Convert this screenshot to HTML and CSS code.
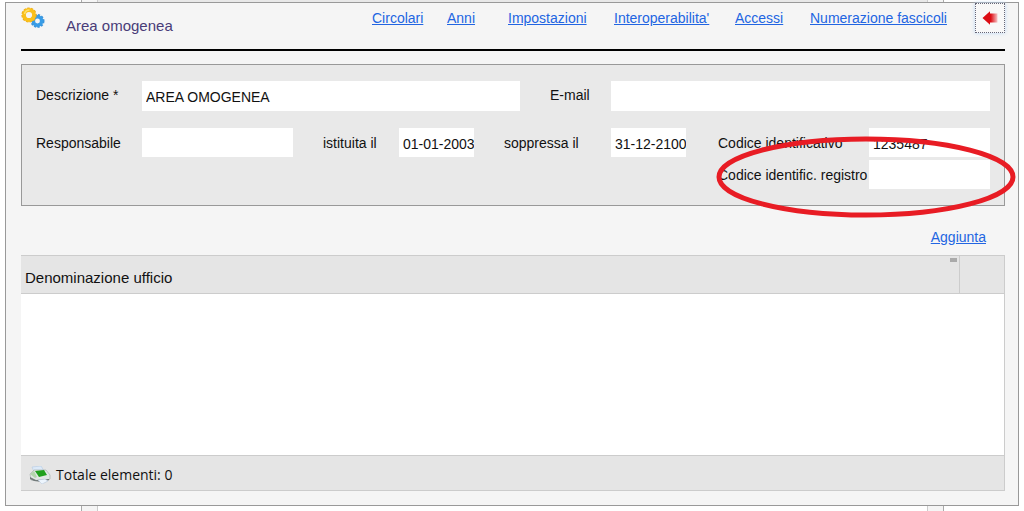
FILE: index.html
```html
<!DOCTYPE html>
<html lang="it">
<head>
<meta charset="utf-8">
<title>Area omogenea</title>
<link rel="stylesheet" href="styles.css">
</head>
<body>
<div class="shell">
  <div class="backdrop"><div class="backdrop-main"></div></div>
  <main class="dialog">
    <header class="header">
      <svg class="gears" viewBox="0 0 24 22" aria-hidden="true">
        <circle cx="16.500" cy="14" r="5.500" fill="none" stroke="#3b93da" stroke-width="3" stroke-dasharray="2 1.200"/>
        <circle cx="16.500" cy="14" r="4.200" fill="none" stroke="#389ce6" stroke-width="3.500"/>
        <circle cx="8" cy="8" r="6.300" fill="none" stroke="#eaa91a" stroke-width="2.600" stroke-dasharray="2.300 1.100"/>
        <circle cx="8" cy="8" r="5" fill="none" stroke="#fac01b" stroke-width="3.800"/>
        <path d="M3.500 7a5 5 0 0 1 5-4" fill="none" stroke="#ffe069" stroke-width="1.500"/>
      </svg>
      <h1 class="title">Area omogenea</h1>
      <nav class="nav">
        <a href="#">Circolari</a>
        <a href="#">Anni</a>
        <a href="#">Impostazioni</a>
        <a href="#">Interoperabilita'</a>
        <a href="#">Accessi</a>
        <a href="#">Numerazione fascicoli</a>
      </nav>
      <button class="back" type="button" aria-label="Indietro">
        <svg viewBox="0 0 16 14" width="16" height="14" aria-hidden="true">
          <defs><linearGradient id="fade"><stop offset="0.550" stop-color="#dc0d14"/><stop offset="1" stop-color="#f6c4c6"/></linearGradient></defs>
          <path d="M0.500 7 8 0.300V2.500h7.500v9H8v2.200z" fill="url(#fade)"/>
        </svg>
      </button>
    </header>

    <form class="panel">
      <div class="row row-main">
        <label for="descrizione">Descrizione *</label>
        <input id="descrizione" type="text" value="AREA OMOGENEA">
        <label class="col-email" for="email">E-mail</label>
        <input id="email" type="text">
      </div>
      <div class="row row-detail">
        <label for="responsabile">Responsabile</label>
        <input id="responsabile" type="text">
        <label class="col-from" for="istituita">istituita il</label>
        <input id="istituita" class="date" type="text" value="01-01-2003">
        <label class="col-to" for="soppressa">soppressa il</label>
        <input id="soppressa" class="date" type="text" value="31-12-2100">
        <label class="col-code" for="codice">Codice identificativo</label>
        <input id="codice" type="text" value="1235487">
        <label class="col-code" for="registro">Codice identific. registro</label>
        <input id="registro" type="text">
      </div>
      <svg class="mark" viewBox="0 0 300 82" aria-hidden="true">
        <ellipse cx="150" cy="41" rx="147" ry="38" fill="none" stroke="#e81c24" stroke-width="5"/>
      </svg>
    </form>

    <div class="actions"><a href="#">Aggiunta</a></div>

    <table class="offices">
      <thead>
        <tr><th class="name" scope="col">Denominazione ufficio<span class="grip"></span></th><th class="tools"></th></tr>
      </thead>
      <tbody>
        <tr><td class="empty" colspan="2"></td></tr>
      </tbody>
      <tfoot>
        <tr><td colspan="2">
          <div class="total">
            <svg viewBox="0 0 22 18" width="22" height="18" aria-hidden="true">
              <path d="M3 1 12 0l3 5-9 3z" fill="#dceaf9" stroke="#b5cbe2" stroke-width="0.600"/>
              <path d="M1 8 5 4l12 0 4 5v4l-5 3-14-2z" fill="#e2e7e6" stroke="#a9b1b0" stroke-width="0.700"/>
              <path d="M1 11l6 3 13-1v1l-5 2-10-1-4-2z" fill="#747b7b"/>
              <path d="M6 5l9-1 3 5-8 2z" fill="#20a01e"/>
              <path d="M1 8l4-3 3 6-2 1z" fill="#b4d5ad"/>
              <path d="M9 14l7-1 3 2-6 3z" fill="#edf5fd" stroke="#b4c7dc" stroke-width="0.500"/>
            </svg>
            <span>Totale elementi: 0</span>
          </div>
        </td></tr>
      </tfoot>
    </table>
  </main>
</div>
</body>
</html>
```
FILE: styles.css
```css
* { box-sizing: border-box; }

body {
  margin: 0;
  background: #fff;
  color: #111;
  font: 14px/16px "Liberation Sans", Arial, sans-serif;
}

a { color: #2265e2; }

.shell {
  display: grid;
  min-height: 100vh;
}

.backdrop,
.dialog { grid-area: 1 / 1; }

.backdrop {
  display: flex;
  margin: 0 80px 0 81px;
  padding: 0 15px;
  background: #f5f5f5;
  border: solid #aaa;
  border-width: 0 1px;
}

.backdrop-main {
  flex: 1;
  background: linear-gradient(#e8e8e8 50%, #fff 50%);
  border: solid #ccc;
  border-width: 0 1px;
}

.dialog {
  display: flex;
  flex-direction: column;
  margin: 2px 5px 5px;
  padding: 0 13px 14px 15px;
  background: #f5f5f5;
  border: 1px solid #999;
}

.header {
  display: flex;
  align-items: flex-start;
  height: 48px;
  border-bottom: 2px solid #000;
}

.gears {
  width: 24px;
  height: 22px;
  margin-top: 4px;
}

.title {
  margin: 14px auto 0 21px;
  color: #493c78;
  font-size: 15px;
  font-weight: 400;
  line-height: 18px;
}

.nav {
  display: grid;
  grid-template-columns: 75px 61px 106px 121px 75px 134px;
  margin: 7px 31px 0 0;
  white-space: nowrap;
}

.back {
  display: flex;
  align-items: center;
  justify-content: center;
  width: 30px;
  height: 30px;
  padding: 0;
  background: #f8f8f8;
  border: 1px dotted #667;
  box-shadow: 0 0 4px #bcd8f4;
}

.panel {
  position: relative;
  display: flex;
  flex-direction: column;
  gap: 17px;
  margin-top: 13px;
  padding: 16px 14px;
  background: #e9e9e9;
  border: 1px solid #999;
}

.row {
  display: grid;
  row-gap: 3px;
  line-height: 29px;
}

.row-main { grid-template-columns: 106fr 378fr 91fr 379fr; }
.row-detail { grid-template-columns: 106fr 151fr 106fr 75fr 137fr 75fr 183fr 121fr; }

.row label { white-space: nowrap; }
.row-detail label { line-height: 31px; height: 29px; }
.col-email,
.col-from,
.col-to { padding-left: 30px; }
.col-code {
  grid-column: 7;
  padding-left: 32px;
}

.row input {
  width: 100%;
  min-width: 0;
  height: 29px;
  padding: 3px 0 0 4px;
  background: #fff;
  border: 0;
  border-radius: 0;
  color: #111;
  font: inherit;
  line-height: 16px;
}

.row-main input {
  height: 30px;
  padding-top: 1px;
}

.mark {
  position: absolute;
  top: 71px;
  right: -12px;
  width: 300px;
  height: 82px;
  pointer-events: none;
}

.actions {
  padding: 23px 19px 10px;
  text-align: right;
}

.offices {
  width: 100%;
  background: #fff;
  border: 1px solid #ccc;
  border-left: 0;
  border-collapse: separate;
  border-spacing: 0;
}

.offices th {
  position: relative;
  height: 38px;
  padding: 6px 4px 0;
  background: #e5e5e5;
  border-bottom: 1px solid #ccc;
  font-size: 15px;
  font-weight: 400;
  text-align: left;
}

.offices .name { border-right: 1px solid #ccc; }
.offices .tools { width: 44px; }

.grip {
  position: absolute;
  top: 2px;
  right: 2px;
  width: 7px;
  height: 4px;
  background: #aaa;
}

.offices td { padding: 0; }
.offices .empty { height: 161px; }

.offices tfoot td {
  height: 35px;
  background: #e5e5e5;
  border-top: 1px solid #ccc;
}

.total {
  display: flex;
  align-items: center;
  gap: 5px;
  padding: 3px 8px 0;
  font: 14px/20px "Open Sans", "Noto Sans", sans-serif;
}
```
